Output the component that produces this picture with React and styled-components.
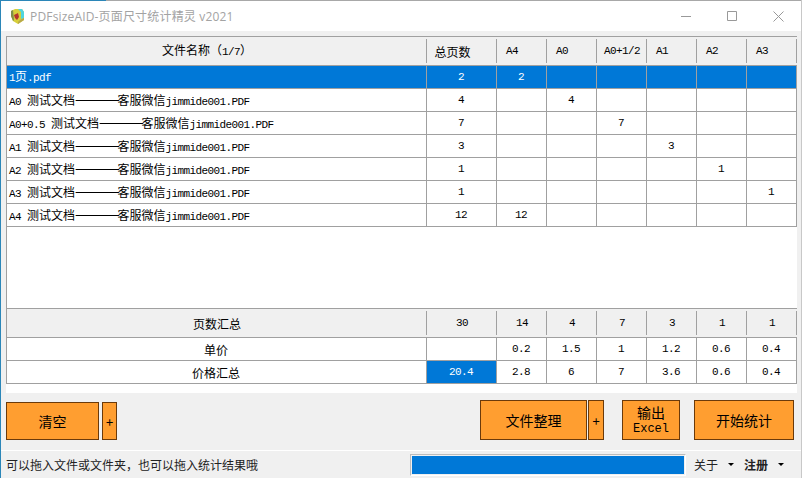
import styled, { createGlobalStyle } from "styled-components";

const GRID = "#a0a0a0";
const BLUE = "#0078d7";
const columns = "420px 70px repeat(6, 50px)";

const Global = createGlobalStyle`
  html, body { margin: 0; padding: 0; background: #f0f0f0; }
  * { box-sizing: border-box; }
`;

const Win = styled.div`
  width: 802px;
  height: 478px;
  display: flex;
  flex-direction: column;
  background: #f0f0f0;
  border-left: 1px solid #2b86b8;
  border-right: 1px solid #c8c8c8;
  overflow: hidden;
  font-family: "Liberation Mono", "Noto Sans CJK SC", monospace;
  font-size: 11px;
`;

const TopEdge = styled.div`
  height: 1px;
  flex: none;
  background: linear-gradient(to right, #2b86b8 105px, #a8a8a8 105px);
`;

const TitleBar = styled.div`
  height: 30px;
  flex: none;
  display: flex;
  align-items: center;
  background: #fff;
  padding-left: 9px;
`;

const AppTitle = styled.span`
  margin-left: 5px;
  flex: 1;
  font-family: "Open Sans", "Noto Sans CJK SC", sans-serif;
  font-size: 12px;
  letter-spacing: 0.17px;
  color: #a3a3a3;
`;

const WinButton = styled.div`
  width: 46px;
  height: 30px;
  display: flex;
  align-items: center;
  justify-content: center;
`;

const Panel = styled.div`
  height: 357px;
  flex: none;
  margin: 5px 4px 0 5px;
  background: #fff;
  display: flex;
  flex-direction: column;
`;

const Table = styled.div`
  width: 791px;
  border-top: 1px solid ${GRID};
  border-left: 1px solid ${GRID};
`;

const FileTable = styled(Table)`
  flex: 1;
`;

const TotalTable = styled(Table)`
  margin-bottom: 9px;
`;

const Row = styled.div`
  display: grid;
  grid-template-columns: ${columns};
  height: ${(p) => (p.$head ? 29 : 23)}px;
  background: ${(p) => (p.$selected ? BLUE : p.$head ? "#f0f0f0" : "#fff")};
  color: ${(p) => (p.$selected ? "#fff" : "#000")};
  border-bottom: 1px solid ${GRID};
`;

const Cell = styled.div`
  display: flex;
  align-items: center;
  justify-content: ${(p) => (p.$left ? "flex-start" : "center")};
  padding-left: ${(p) => (p.$left ? 2 : 0)}px;
  padding-right: ${(p) => (p.$left ? 0 : 1)}px;
  white-space: nowrap;
  letter-spacing: -0.6px;
  border-right: 1px solid ${GRID};
  background: ${(p) => (p.$active ? BLUE : "transparent")};
  color: ${(p) => (p.$active ? "#fff" : "inherit")};
`;

const HeadCell = styled.div`
  position: relative;
  display: flex;
  align-items: center;
  justify-content: ${(p) => (p.$left ? "flex-start" : "center")};
  padding-left: ${(p) => (p.$left ? 9 : 0)}px;
  padding-right: ${(p) => p.$trail || 0}px;
  white-space: nowrap;
  letter-spacing: -0.6px;

  &::after {
    content: "";
    position: absolute;
    right: 0;
    top: 2px;
    bottom: 2px;
    width: 1px;
    background: ${GRID};
  }
`;

const Cjk = styled.span`
  font-family: "Noto Sans CJK SC", sans-serif;
  font-size: 12px;
  letter-spacing: 0;
`;

const Dash = styled(Cjk)`
  font-size: 14px;
  letter-spacing: -2.25px;
  vertical-align: 1px;
`;

const Line = styled.span`
  line-height: 16px;
`;

const Actions = styled.div`
  height: 57px;
  flex: none;
  display: flex;
  align-items: flex-start;
  padding: 7px 7px 0 5px;
`;

const Orange = styled.button`
  width: ${(p) => p.$w}px;
  height: ${(p) => p.$h || 40}px;
  margin-left: ${(p) => p.$gap || 0}px;
  margin-top: ${(p) => p.$top || 0}px;
  padding: 0;
  background: #ff9e30;
  border: 1px solid #6b3a0a;
  color: #000;
  font-family: "Noto Sans CJK SC", sans-serif;
  font-size: ${(p) => p.$size || 14}px;
  line-height: 1;
  display: flex;
  flex-direction: column;
  align-items: center;
  justify-content: center;
`;

const ExcelLabel = styled.span`
  font-family: "Liberation Mono", monospace;
  font-size: 12px;
  margin-top: 4px;
`;

const Spacer = styled.div`
  flex: 1;
`;

const StatusBar = styled.div`
  flex: 1;
  display: flex;
  align-items: center;
  border-top: 1px solid #fff;
  padding-left: 5px;
  font-family: "Noto Sans CJK SC", sans-serif;
  font-size: 12px;
  color: #222;
`;

const Progress = styled.div`
  width: 276px;
  height: 22px;
  margin-left: 152px;
  padding: 1px;
  border: 1px solid #bcbcbc;
  border-right-color: #fff;
  border-bottom-color: #fff;

  &::before {
    content: "";
    display: block;
    height: 100%;
    background: ${BLUE};
  }
`;

const StatusMenu = styled.span`
  margin-left: ${(p) => p.$gap}px;
  font-weight: ${(p) => (p.$bold ? 700 : 400)};
  display: flex;
  align-items: center;
`;

const Caret = styled.i`
  width: 0;
  height: 0;
  margin-left: 10px;
  border-left: 3px solid transparent;
  border-right: 3px solid transparent;
  border-top: 3px solid #000;
`;

const sizes = ["A4", "A0", "A0+1/2", "A1", "A2", "A3"];

const files = [
  { name: "1页.pdf", plain: true, total: 2, col: 0 },
  { name: "A0", total: 4, col: 1 },
  { name: "A0+0.5", total: 7, col: 2 },
  { name: "A1", total: 3, col: 3 },
  { name: "A2", total: 1, col: 4 },
  { name: "A3", total: 1, col: 5 },
  { name: "A4", total: 12, col: 0 },
];

const Logo = () => (
  <svg width="15" height="17" viewBox="0 0 15 17">
    <path d="M1 3 L5 1 L12 1 L14 4 L14 12 L8 16 L3 13 L1 8 Z" fill="#d7cf3a" />
    <path d="M8 1 L12 1 L14 4 L14 10 L11 11 L11 4 Z" fill="#4fd5e0" />
    <path d="M1 3 L3 2 L4 12 L3 13 L1 8 Z" fill="#7f8f4a" />
    <path d="M4 7 L8 5 L9 9 L7 12 L5 10 Z" fill="#b5342c" />
    <path d="M10 12 L14 10 L14 12 L8 16 L8 14 Z" fill="#b8a94a" />
  </svg>
);

const WinIcon = ({ d }) => (
  <svg width="11" height="11" viewBox="0 0 11 11" fill="none" stroke="#999" strokeWidth="1">
    <path d={d} />
  </svg>
);

const FileName = ({ file }) =>
  file.plain ? (
    <Line>
      1<Cjk>页</Cjk>.pdf
    </Line>
  ) : (
    <Line>
      {file.name}&nbsp;<Cjk>测试文档</Cjk>
      <Dash>————</Dash>
      <Cjk>客服微信</Cjk>jimmide001.PDF
    </Line>
  );

const App = () => (
  <>
    <Global />
    <Win>
      <TopEdge />
      <TitleBar>
        <Logo />
        <AppTitle>PDFsizeAID-页面尺寸统计精灵 v2021</AppTitle>
        <WinButton><WinIcon d="M0 5.5H10" /></WinButton>
        <WinButton><WinIcon d="M0.5 0.5H9.5V9.5H0.5Z" /></WinButton>
        <WinButton><WinIcon d="M0.5 0.5L10.5 10.5M10.5 0.5L0.5 10.5" /></WinButton>
      </TitleBar>
      <Panel>
        <FileTable>
          <Row $head>
            <HeadCell $trail={20}><Line><Cjk>文件名称（</Cjk>1/7<Cjk>）</Cjk></Line></HeadCell>
            <HeadCell $trail={19}><Cjk>总页数</Cjk></HeadCell>
            {sizes.map((s) => (
              <HeadCell $left={s.length === 2} key={s}>{s}</HeadCell>
            ))}
          </Row>
          {files.map((f, i) => (
            <Row key={i} $selected={i === 0}>
              <Cell $left><FileName file={f} /></Cell>
              <Cell>{f.total}</Cell>
              {sizes.map((s, c) => (
                <Cell key={s}>{c === f.col ? f.total : ""}</Cell>
              ))}
            </Row>
          ))}
        </FileTable>
        <TotalTable>
          <Row $head>
            <HeadCell><Cjk>页数汇总</Cjk></HeadCell>
            <HeadCell>30</HeadCell>
            {[14, 4, 7, 3, 1, 1].map((v, i) => (
              <HeadCell key={i}>{v}</HeadCell>
            ))}
          </Row>
          <Row>
            <Cell><Cjk>单价</Cjk></Cell>
            <Cell />
            {[0.2, 1.5, 1, 1.2, 0.6, 0.4].map((v, i) => (
              <Cell key={i}>{v}</Cell>
            ))}
          </Row>
          <Row>
            <Cell><Cjk>价格汇总</Cjk></Cell>
            <Cell $active>20.4</Cell>
            {[2.8, 6, 7, 3.6, 0.6, 0.4].map((v, i) => (
              <Cell key={i}>{v}</Cell>
            ))}
          </Row>
        </TotalTable>
      </Panel>
      <Actions>
        <Orange $w={93} $top={2} $h={38}>清空</Orange>
        <Orange $w={15} $gap={3} $top={2} $h={38} $size={13}>+</Orange>
        <Spacer />
        <Orange $w={107}>文件整理</Orange>
        <Orange $w={16} $gap={1} $size={13}>+</Orange>
        <Orange $w={58} $gap={18}>
          输出
          <ExcelLabel>Excel</ExcelLabel>
        </Orange>
        <Orange $w={100} $gap={14}>开始统计</Orange>
      </Actions>
      <StatusBar>
        可以拖入文件或文件夹，也可以拖入统计结果哦
        <Progress />
        <StatusMenu $gap={8}>关于<Caret /></StatusMenu>
        <StatusMenu $gap={10} $bold>注册<Caret /></StatusMenu>
      </StatusBar>
    </Win>
  </>
);

export default App;
